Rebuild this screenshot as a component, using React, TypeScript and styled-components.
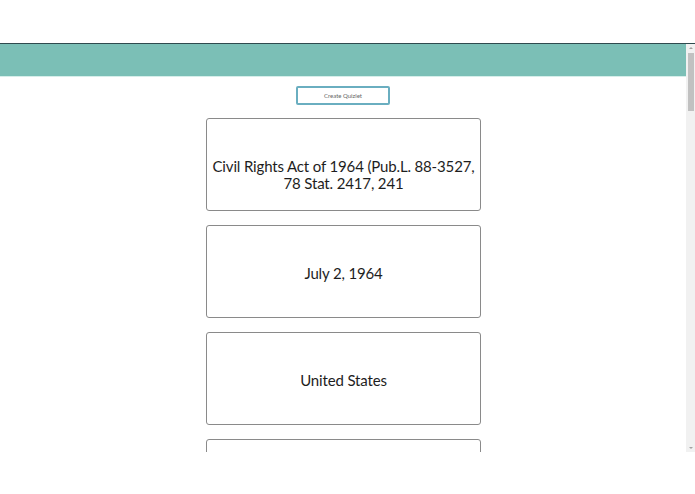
import React from "react";
import styled, { createGlobalStyle } from "styled-components";

const GlobalStyle = createGlobalStyle`
  html, body {
    margin: 0;
    padding: 0;
    background: #fff;
    font-family: "Lato", "Noto Sans", sans-serif;
  }
`;

const Page = styled.div`
  width: 695px;
  height: 494px;
  display: flex;
  flex-direction: column;
  background: #fff;
  overflow: hidden;
`;

const TopGap = styled.div`
  height: 43px;
  flex: none;
`;

const Frame = styled.div`
  height: 409px;
  flex: none;
  display: flex;
  border-top: 1px solid #2f4a4e;
  box-sizing: border-box;
`;

const Viewport = styled.div`
  flex: 1;
  overflow: hidden;
  display: flex;
  flex-direction: column;
`;

const Header = styled.header`
  height: 32px;
  flex: none;
  background: #7bbfb6;
  border-bottom: 1px solid #d6eeea;
`;

const Main = styled.main`
  display: flex;
  flex-direction: column;
  align-items: center;
  padding-top: 9px;
`;

const CreateButton = styled.button`
  width: 94px;
  height: 19px;
  box-sizing: border-box;
  border: 2px solid #6aaec0;
  border-radius: 2px;
  background: #fff;
  color: #666;
  font-family: inherit;
  font-size: 6px;
  padding: 0;
  cursor: pointer;
`;

const CardList = styled.div`
  display: flex;
  flex-direction: column;
  gap: 14px;
  margin-top: 13px;
  margin-left: 1px;
`;

const Card = styled.div`
  width: 275px;
  height: 93px;
  box-sizing: border-box;
  border: 1px solid #8a8a8a;
  border-radius: 3px;
  text-align: center;
  padding: 39px 0 0;
  color: #1e1e1e;
  font-size: 15px;
  letter-spacing: -0.15px;
  line-height: 17px;
`;

const Scrollbar = styled.div`
  width: 9px;
  flex: none;
  background: #f1f1f1;
  display: flex;
  flex-direction: column;
  align-items: center;
`;

const Arrow = styled.div<{ $down?: boolean }>`
  width: 0;
  height: 0;
  margin: 3px 0;
  border-left: 2px solid transparent;
  border-right: 2px solid transparent;
  ${(p) =>
    p.$down
      ? "border-top: 2px solid #a3a3a3;"
      : "border-bottom: 2px solid #a3a3a3;"}
`;

const Thumb = styled.div`
  width: 6px;
  height: 58px;
  background: #c1c1c1;
  margin-top: 1px;
`;

const Spacer = styled.div`
  flex: 1;
`;

const cards = [
  "Civil Rights Act of 1964 (Pub.L. 88-3527, 78 Stat. 2417, 241",
  "July 2, 1964",
  "United States",
  "",
];

export default function App() {
  return (
    <Page>
      <GlobalStyle />
      <TopGap />
      <Frame>
        <Viewport>
          <Header />
          <Main>
            <CreateButton>Create Quizlet</CreateButton>
            <CardList>
              {cards.map((c, i) => (
                <Card key={i}>{c}</Card>
              ))}
            </CardList>
          </Main>
        </Viewport>
        <Scrollbar>
          <Arrow />
          <Thumb />
          <Spacer />
          <Arrow $down />
        </Scrollbar>
      </Frame>
    </Page>
  );
}
